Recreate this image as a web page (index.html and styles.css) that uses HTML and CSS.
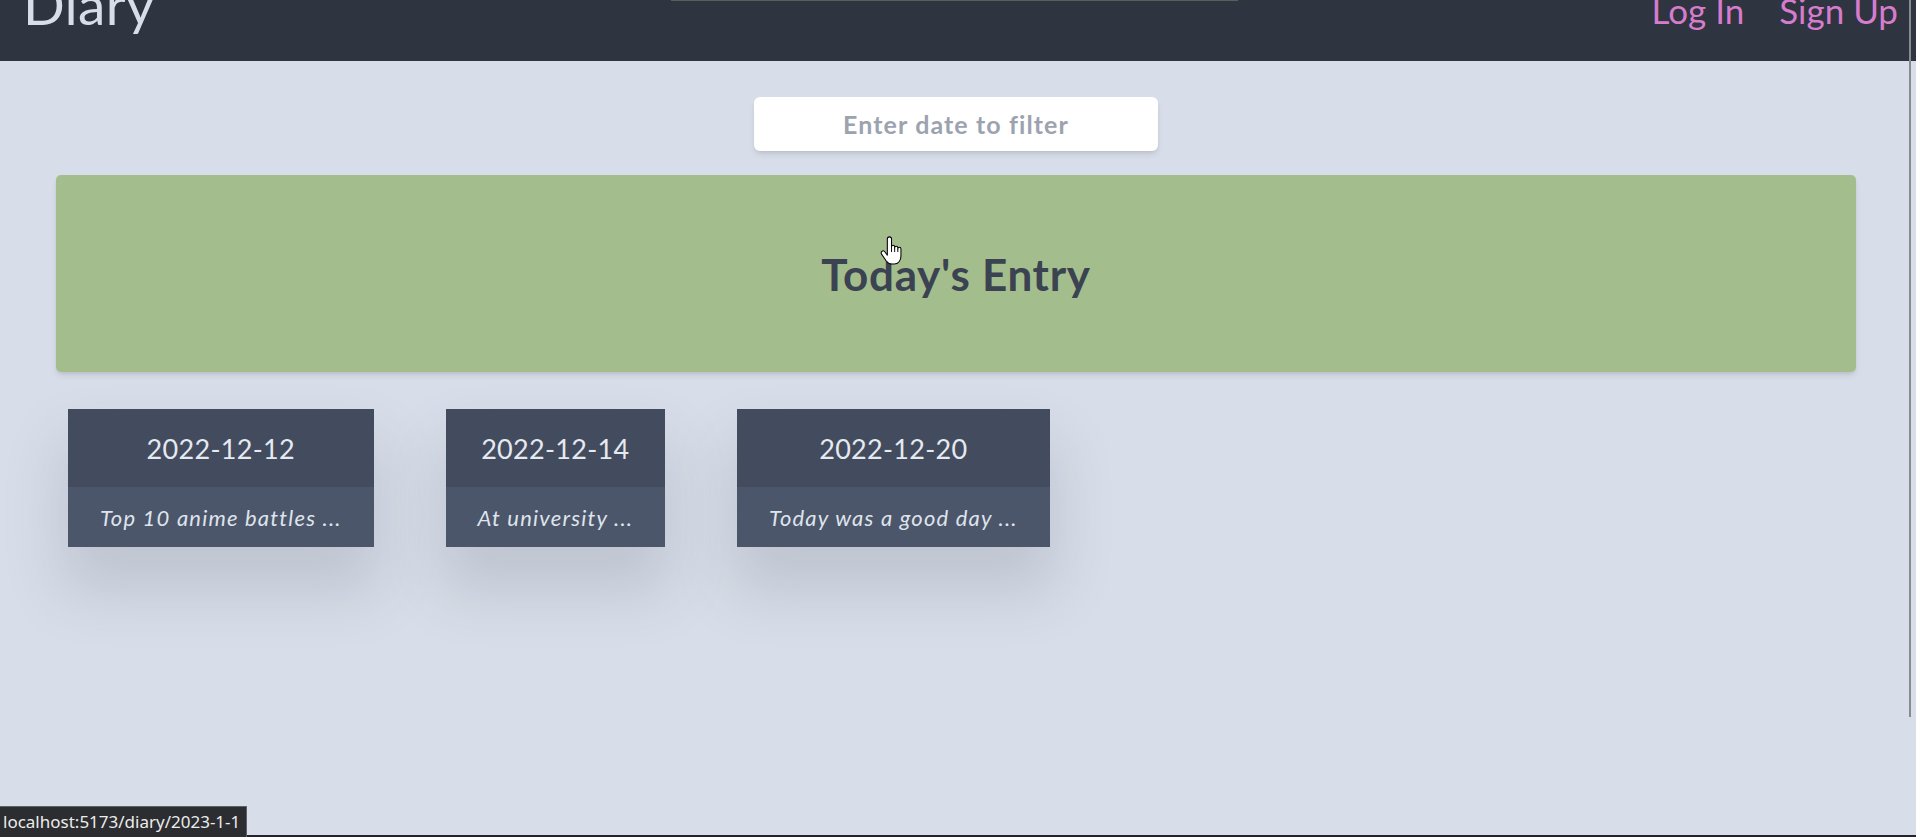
FILE: index.html
```html
<!DOCTYPE html>
<html lang="en">
<head>
<meta charset="utf-8">
<title>Diary</title>
<link rel="stylesheet" href="styles.css">
</head>
<body>
<div class="app">
  <header class="topbar">
    <div class="brand">Diary</div>
    <nav class="auth">
      <a class="auth-link" href="#">Log In</a>
      <a class="auth-link" href="#">Sign Up</a>
    </nav>
    <div class="top-edge"></div>
  </header>
  <main class="content">
    <div class="filter-row">
      <input class="filter" type="text" placeholder="Enter date to filter">
    </div>
    <section class="today">
      <h1 class="today-title">Today's Entry</h1>
      <svg class="cursor" width="22" height="30" viewBox="0 0 21 28" aria-hidden="true">
        <path d="M7 2.5C7 1.4 7.9 0.5 9 0.5C10.1 0.5 11 1.4 11 2.5V10C11 9.2 11.7 8.5 12.5 8.5C13.3 8.5 14 9.2 14 10V11C14 10.2 14.7 9.5 15.5 9.5C16.3 9.5 17 10.2 17 11V12C17 11.2 17.7 10.5 18.5 10.5C19.3 10.5 20 11.2 20 12V19C20 23 17.5 26.5 13.5 26.5H11.5C9 26.5 7.5 25.5 6 23.5L1.5 17C0.8 16 1 14.8 2 14.2C3 13.6 4.2 14 4.8 15L7 18Z" fill="#fff" stroke="#000" stroke-width="1" stroke-linejoin="round"/>
        <path d="M11 10V15M14 11V15M17 12V15" stroke="#000" stroke-width="0.9" fill="none"/>
      </svg>
    </section>
    <section class="entries">
      <article class="entry">
        <div class="entry-date">2022-12-12</div>
        <div class="entry-preview">Top 10 anime battles ...</div>
      </article>
      <article class="entry">
        <div class="entry-date">2022-12-14</div>
        <div class="entry-preview">At university ...</div>
      </article>
      <article class="entry">
        <div class="entry-date">2022-12-20</div>
        <div class="entry-preview">Today was a good day ...</div>
      </article>
    </section>
  </main>
  <div class="scroll-thumb"></div>
  <div class="status-line"></div>
  <div class="status">localhost:5173/diary/2023-1-1</div>
</div>
</body>
</html>
```

FILE: styles.css
```css
* { box-sizing: border-box; }

html, body {
  margin: 0;
  padding: 0;
  height: 100%;
}

body {
  background: #d8dee9;
  font-family: "Lato", "Noto Sans", sans-serif;
  overflow: hidden;
}

.app {
  position: relative;
  width: 1916px;
  height: 837px;
}

.topbar {
  position: relative;
  height: 61px;
  background: #2e3440;
  display: flex;
  justify-content: space-between;
  align-items: flex-start;
  padding: 0 18px 0 23px;
  overflow: hidden;
}

.top-edge {
  position: absolute;
  left: 671px;
  top: 0;
  width: 567px;
  height: 1px;
  background: #5c5f57;
}

.brand {
  font-size: 55px;
  line-height: 1;
  color: #d8dee9;
  margin-top: -23px;
  letter-spacing: 0.3px;
}

.auth {
  display: flex;
  gap: 35px;
  margin-top: -7px;
}

.auth-link {
  font-size: 35px;
  line-height: 1;
  color: #d67ccd;
  text-decoration: none;
}

.content {
  padding: 36px 60px 0 56px;
}

.filter-row {
  display: flex;
  justify-content: center;
}

.filter {
  width: 404px;
  height: 54px;
  border: none;
  border-radius: 6px;
  background: #fff;
  box-shadow: 0 4px 6px -1px rgba(0,0,0,0.1), 0 2px 4px -2px rgba(0,0,0,0.1);
  font-family: inherit;
  font-size: 25px;
  text-align: center;
  outline: none;
}

.filter::placeholder {
  color: #9ca3af;
  font-weight: 700;
  letter-spacing: 1.1px;
}

.today {
  position: relative;
  margin-top: 24px;
  height: 197px;
  background: #a3be8c;
  border-radius: 5px;
  box-shadow: 0 4px 6px -1px rgba(0,0,0,0.1), 0 2px 4px -2px rgba(0,0,0,0.1);
  display: flex;
  align-items: center;
  justify-content: center;
}

.today-title {
  margin: 0;
  font-size: 44px;
  font-weight: 700;
  color: #3b4252;
  letter-spacing: 0.7px;
}

.cursor {
  position: absolute;
  left: 824px;
  top: 61px;
}

.entries {
  display: flex;
  gap: 72px;
  margin-top: 37px;
  padding-left: 12px;
}

.entry {
  display: flex;
  flex-direction: column;
  box-shadow: 0 38px 60px 6px rgba(46,52,64,0.15);
}

.entry-date {
  height: 78px;
  background: #434c5e;
  color: #e5e9f0;
  font-size: 27px;
  letter-spacing: 0.3px;
  display: flex;
  align-items: center;
  justify-content: center;
  padding: 0 32px;
}

.entry-preview {
  height: 60px;
  background: #4c566a;
  color: #dfe4ec;
  font-size: 22px;
  letter-spacing: 1.2px;
  font-style: italic;
  display: flex;
  align-items: center;
  justify-content: center;
  padding: 0 32px;
  white-space: nowrap;
}

.scroll-thumb {
  position: absolute;
  left: 1909px;
  top: 0;
  width: 2px;
  height: 717px;
  background: #888b8f;
}

.status-line {
  position: absolute;
  left: 0;
  bottom: 0;
  width: 100%;
  height: 2px;
  background: #23242b;
}

.status {
  position: absolute;
  left: 0;
  bottom: 0;
  height: 31px;
  padding: 0 6px 0 3px;
  background: #2b2d30;
  border-top: 1px solid #5d6065;
  border-right: 1px solid #5d6065;
  color: #ececec;
  font-family: "Noto Sans", "Open Sans", sans-serif;
  font-size: 17px;
  line-height: 30px;
}
```
